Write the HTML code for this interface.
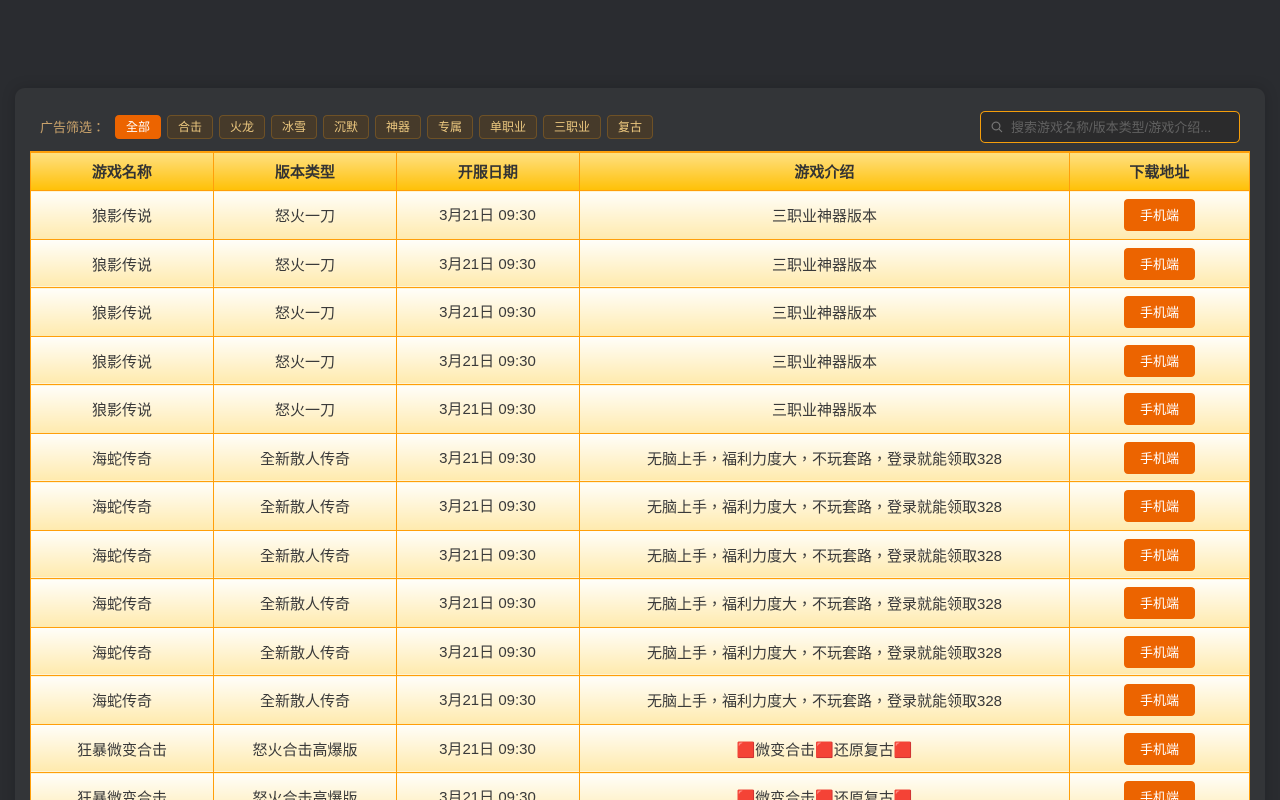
<!DOCTYPE html>
<html lang="zh-TW">
<head>
<meta charset="utf-8">
<title>广告筛选</title>
<style>
*{box-sizing:border-box;margin:0;padding:0}
html,body{width:1280px;height:800px;overflow:hidden}
body{background:#2a2c30;font-family:"Liberation Sans",sans-serif;position:relative}
.panel{position:absolute;left:15px;top:88px;width:1250px;height:800px;background:#333538;border-radius:10px;box-shadow:0 0 14px rgba(0,0,0,.18)}
.lbl{position:absolute;left:40px;top:119px;font-size:13px;line-height:18px;color:#c9a26b}
.tag{position:absolute;top:115px;height:24px;line-height:22px;text-align:center;font-size:12px;color:#eac67e;background:#463a2a;border:1px solid #6e5126;border-radius:4px}
.tag.on{background:#ec6400;border-color:#ec6400;color:#fff}
.search{position:absolute;left:980px;top:111px;width:260px;height:32px;background:#2b2b2c;border:1px solid #f59e0b;border-radius:5px;color:#616161;font-size:13px;line-height:31px;padding-left:30px;white-space:nowrap}
.search svg{position:absolute;left:10px;top:9px}
table{position:absolute;left:30px;top:151px;width:1219px;border-collapse:collapse;table-layout:fixed;font-size:15px;color:#3a3a3a}
th,td{border:1px solid #ff9f0a;text-align:center;vertical-align:middle}
thead tr{height:38.5px}
th{font-size:15px;font-weight:bold;background:linear-gradient(#ffe082,#ffc107);border-top-width:2px;border-top-color:#ff9f0a;color:#333;padding:0}
tbody tr{height:48.5px}
td{background:linear-gradient(#fffefa,#ffeaad);padding:2px 0 0}
.d{position:relative;left:-.5px;top:-1px}
.b{display:inline-block;width:71px;height:32px;line-height:33px;background:#ec6400;color:#fff;font-size:13px;border-radius:4px;vertical-align:middle;position:relative;top:-.7px}
</style>
</head>
<body>
<div class="panel"></div>
<div class="lbl">广告筛选：</div>
<div class="tag on" style="left:115px;width:46px">全部</div>
<div class="tag" style="left:167px;width:46px">合击</div>
<div class="tag" style="left:219px;width:46px">火龙</div>
<div class="tag" style="left:271px;width:46px">冰雪</div>
<div class="tag" style="left:323px;width:46px">沉默</div>
<div class="tag" style="left:375px;width:46px">神器</div>
<div class="tag" style="left:427px;width:46px">专属</div>
<div class="tag" style="left:479px;width:58px">单职业</div>
<div class="tag" style="left:543px;width:58px">三职业</div>
<div class="tag" style="left:607px;width:46px">复古</div>
<div class="search"><svg width="12" height="12" viewBox="0 0 12 12" fill="none" stroke="#777" stroke-width="1.1"><circle cx="5" cy="5" r="3.9"/><path d="M8 8l3 3"/></svg>搜索游戏名称/版本类型/游戏介绍...</div>
<table>
<colgroup><col style="width:183px"><col style="width:183px"><col style="width:183px"><col style="width:490px"><col style="width:180px"></colgroup>
<thead><tr><th>游戏名称</th><th>版本类型</th><th>开服日期</th><th>游戏介绍</th><th>下载地址</th></tr></thead>
<tbody>
<tr><td>狼影传说</td><td>怒火一刀</td><td><span class="d">3月21日 09:30</span></td><td>三职业神器版本</td><td><span class="b">手机端</span></td></tr>
<tr><td>狼影传说</td><td>怒火一刀</td><td><span class="d">3月21日 09:30</span></td><td>三职业神器版本</td><td><span class="b">手机端</span></td></tr>
<tr><td>狼影传说</td><td>怒火一刀</td><td><span class="d">3月21日 09:30</span></td><td>三职业神器版本</td><td><span class="b">手机端</span></td></tr>
<tr><td>狼影传说</td><td>怒火一刀</td><td><span class="d">3月21日 09:30</span></td><td>三职业神器版本</td><td><span class="b">手机端</span></td></tr>
<tr><td>狼影传说</td><td>怒火一刀</td><td><span class="d">3月21日 09:30</span></td><td>三职业神器版本</td><td><span class="b">手机端</span></td></tr>
<tr><td>海蛇传奇</td><td>全新散人传奇</td><td><span class="d">3月21日 09:30</span></td><td>无脑上手，福利力度大，不玩套路，登录就能领取328</td><td><span class="b">手机端</span></td></tr>
<tr><td>海蛇传奇</td><td>全新散人传奇</td><td><span class="d">3月21日 09:30</span></td><td>无脑上手，福利力度大，不玩套路，登录就能领取328</td><td><span class="b">手机端</span></td></tr>
<tr><td>海蛇传奇</td><td>全新散人传奇</td><td><span class="d">3月21日 09:30</span></td><td>无脑上手，福利力度大，不玩套路，登录就能领取328</td><td><span class="b">手机端</span></td></tr>
<tr><td>海蛇传奇</td><td>全新散人传奇</td><td><span class="d">3月21日 09:30</span></td><td>无脑上手，福利力度大，不玩套路，登录就能领取328</td><td><span class="b">手机端</span></td></tr>
<tr><td>海蛇传奇</td><td>全新散人传奇</td><td><span class="d">3月21日 09:30</span></td><td>无脑上手，福利力度大，不玩套路，登录就能领取328</td><td><span class="b">手机端</span></td></tr>
<tr><td>海蛇传奇</td><td>全新散人传奇</td><td><span class="d">3月21日 09:30</span></td><td>无脑上手，福利力度大，不玩套路，登录就能领取328</td><td><span class="b">手机端</span></td></tr>
<tr><td>狂暴微变合击</td><td>怒火合击高爆版</td><td><span class="d">3月21日 09:30</span></td><td>🟥微变合击🟥还原复古🟥</td><td><span class="b">手机端</span></td></tr>
<tr><td>狂暴微变合击</td><td>怒火合击高爆版</td><td><span class="d">3月21日 09:30</span></td><td>🟥微变合击🟥还原复古🟥</td><td><span class="b">手机端</span></td></tr>
</tbody>
</table>
</body>
</html>
